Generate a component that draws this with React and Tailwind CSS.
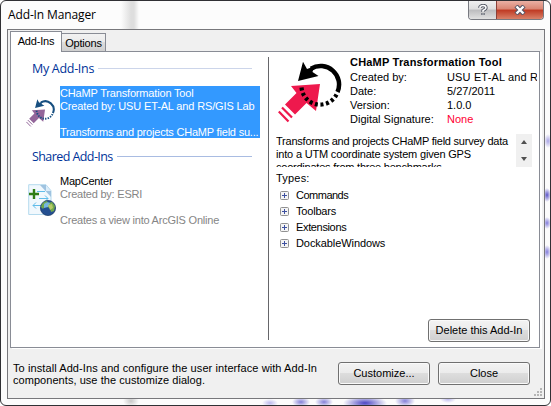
import React from 'react';

const ui = 'font-["Liberation_Sans",Arial,sans-serif]';
const segoe = 'font-["Open_Sans","Noto_Sans",sans-serif]';

function ArrowIcon({ className, arrow, ring }) {
  return (
    <svg viewBox="0 0 64 64" className={className} fill="none">
      <path d="M42 23 13 25 18.500 32 7 43.500 17 53.500 28.500 42 38 50Z" fill={arrow} />
      <path d="M4 46.500 14 56.500M.8 50.500 10.500 60.500" stroke={arrow} strokeWidth="2.200" />
      <path d="M33 7.700A18.500 18.500 0 0 1 59.500 31" stroke={ring} strokeWidth="4.500" />
      <path d="M25 .7 20 20 40.500 15 34.500 11 36 5.500 29 8Z" fill={ring} />
      <path d="M58.500 33.500A18.500 18.500 0 0 1 23.500 25" stroke={ring} strokeWidth="4.200" strokeDasharray="3 2.600" />
    </svg>
  );
}

function MapIcon() {
  return (
    <svg viewBox="0 0 28 32" className="h-8 w-7" fill="none">
      <path d="M.7.7H18l5 6V30.5H.7Z" fill="#f1f8fd" stroke="#b4daee" />
      <path d="M12 1h6l5 6v6Z" fill="#9fc3e0" />
      <path d="M18 1v6h5Z" fill="#dceefa" />
      <path d="M9 7.5h8M11 14.5h9m-3-3 3 3-3 3M5 21.5h9M8 18.500l-3 3 3 3" stroke="#62bdea" />
      <path d="M6 5v10M1 10h10" stroke="#2f7e16" strokeWidth="2.4" />
      <circle cx="20" cy="24" r="7.6" fill="#244f91" stroke="#17335f" strokeWidth=".7" />
      <path d="M14 20q2-3 5-3l1 2-3 3-2 3-2-2ZM20 19l4-1 3 4-1 5-3 1-1-4-3-1Z" fill="#71a94a" />
      <path d="M16 20q3-3 6-1l-2 4-4 1Z" fill="#76b6df" />
      <path d="m20 21 4-1 1 4-3 2Z" fill="#b6ca67" />
    </svg>
  );
}

function Button({ children, className }) {
  return (
    <button className={`flex h-[23px] shrink-0 items-center justify-center rounded-[3px] border border-[#707070] bg-[linear-gradient(#f3f3f3,#ebebeb_49%,#dddddd_50%,#cfcfcf)] whitespace-nowrap shadow-[inset_0_0_0_1px_#fafafa] ${className}`}>
      {children}
    </button>
  );
}

function Heading({ children, line, tracking }) {
  return (
    <div className={`flex h-[18px] items-center gap-1 pl-[21px] pr-[16px] text-[12.5px] text-[#003399] ${segoe}`}>
      <span className={`whitespace-nowrap ${tracking}`}>{children}</span>
      <i className={`h-px flex-1 ${line}`} />
    </div>
  );
}

function Detail({ label, value, valueClass = '' }) {
  return (
    <div className="flex h-[14px] items-center whitespace-nowrap">
      <span className="w-[97px] shrink-0">{label}</span>
      <span className={valueClass}>{value}</span>
    </div>
  );
}

function TreeRow({ children, tracking }) {
  return (
    <div className="flex h-4 items-center gap-[7px]">
      <svg viewBox="0 0 9 9" className="size-[9px]" fill="none">
        <rect x=".5" y=".5" width="8" height="8" rx="1" fill="#f4f4f4" stroke="#919191" />
        <path d="M2 4.500h5M4.500 2v5" stroke="#3d50a0" />
      </svg>
      <span className={tracking}>{children}</span>
    </div>
  );
}

export default function App() {
  return (
    <div className={`flex h-[406px] w-[551px] flex-col overflow-hidden rounded-[6px] border border-[#303034] bg-[#fcfcfc] text-[11px] leading-[13px] text-black ${ui}`}>
      <header className="flex h-7 shrink-0 items-start justify-between bg-[linear-gradient(90deg,transparent_120px,#dedede_130px,#dedede_133px,transparent_138px)] pl-[7px] pr-[6px]">
        <h1 className={`pt-[5px] text-[12px] leading-[18px] tracking-[-0.13px] ${segoe}`}>Add-In Manager</h1>
        <div className="flex h-[19px] w-[76px] overflow-hidden rounded-b-[4px] border border-t-0 border-[#777980]">
          <div className="flex w-[27px] items-center justify-center bg-[linear-gradient(#f0f0f0,#dedede_45%,#bcbcbe_50%,#e1e1e1)]">
            <svg viewBox="0 0 10 12" className="h-3 w-2.5" fill="none">
              <path d="M2 4V3Q3 1.500 5 1.500Q8 1.500 8 4Q8 5 5 6.500V8M5 9v2" stroke="#555a66" strokeWidth="3.300" />
              <path d="M2 4V3Q3 1.500 5 1.500Q8 1.500 8 4Q8 5 5 6.500V8M5 9.500v1" stroke="#fff" strokeWidth="1.500" />
            </svg>
          </div>
          <div className="flex flex-1 items-center justify-center border-l border-[#8c4038] bg-[linear-gradient(#eab0a4,#d98472_45%,#bf3922_50%,#d98168)]">
            <svg viewBox="0 0 12 10" className="h-2.5 w-3" fill="none">
              <path d="m2 1 8 8m0-8L2 9" stroke="#555566" strokeWidth="4.400" />
              <path d="m2.500 1.500 7 7m0-7-7 7" stroke="#fff" strokeWidth="2.400" />
            </svg>
          </div>
        </div>
      </header>

      <div className="flex flex-1 bg-[radial-gradient(ellipse_4px_7px_at_546px_166px,#5a53c8,transparent),radial-gradient(ellipse_4px_6px_at_546px_194px,#837ddc,transparent),radial-gradient(ellipse_4px_7px_at_546px_223px,#837ddc,transparent),radial-gradient(ellipse_4px_7px_at_547px_112px,#aaa6e6,transparent),radial-gradient(ellipse_9px_5px_at_300px_373px,#8480d8,transparent),radial-gradient(ellipse_9px_5px_at_323px_373px,#8480d8,transparent),radial-gradient(ellipse_22px_7px_at_364px_374px,#4b45c4,transparent),radial-gradient(ellipse_10px_6px_at_404px_372px,#8480d8,transparent),radial-gradient(ellipse_8px_4px_at_447px_370px,#bbb8ee,transparent),radial-gradient(ellipse_8px_4px_at_269px_374px,#bbb8ee,transparent),radial-gradient(ellipse_8px_6px_at_130px_372px,#c8c8c8,transparent)] pl-[6px]">
        <main className="flex h-[370px] w-[538px] flex-col border border-[#77777b] bg-[#f0f0f0]">
          <nav className="flex h-[21px] shrink-0 items-end pl-[2px] tracking-[-0.2px]">
            <div className="z-10 -mb-px flex h-[21px] w-[52px] items-center justify-center border border-b-0 border-[#898c95] bg-white pb-px">Add-Ins</div>
            <div className="flex h-[18px] w-[44px] items-center justify-center border border-b-0 border-l-0 border-[#898c95] bg-[linear-gradient(#f2f2f2,#ebebeb_49%,#dddddd_50%,#cfcfcf)] pt-px">Options</div>
          </nav>
          <div className="mx-[2px] flex h-[297px] w-[530px] shrink-0 border border-[#898c95] bg-white shadow-[2px_1px_0_#fff]">
            <section className="w-[257px] shrink-0 pt-[7px]">
              <Heading line="bg-[#ccd5ea]" tracking="tracking-[-0.3px]">My Add-Ins</Heading>
              <div className="mt-[9px] flex h-[52px] pl-[15px]">
                <ArrowIcon className="mt-[13px] mr-[5px] size-[29px] shrink-0" arrow="#93669a" ring="#174f80" />
                <div className="w-[200px] bg-[#3399ff] whitespace-nowrap pt-px text-white">
                  <p className="tracking-[-0.17px]">CHaMP Transformation Tool</p>
                  <p className="tracking-[-0.14px]">Created by: USU ET-AL and RS/GIS Lab</p>
                  <p className="mt-[13px] -mb-px tracking-[-0.2px]">Transforms and projects CHaMP field su...</p>
                </div>
              </div>
              <div className="mt-[9px]"><Heading line="bg-[#a9bce2]" tracking="tracking-[-0.58px]">Shared Add-Ins</Heading></div>
              <div className="mt-[10px] flex pl-[17px]">
                <div className="mt-[9px] mr-1"><MapIcon /></div>
                <div className="whitespace-nowrap tracking-[-0.22px] text-[#858585]">
                  <p className="text-black">MapCenter</p>
                  <p>Created by: ESRI</p>
                  <p className="mt-[13px]">Creates a view into ArcGIS Online</p>
                </div>
              </div>
            </section>
            <i className="mt-[5px] h-[283px] w-px shrink-0 bg-[#66666a]" />
            <section className="flex min-w-0 flex-1 flex-col pl-[7px] pr-[2px]">
              <div className="flex h-[82px] shrink-0 overflow-hidden pt-1">
                <ArrowIcon className="mt-[5px] ml-[2px] mr-[8px] size-16 shrink-0" arrow="#ee194d" ring="#000" />
                <div>
                  <p className="h-[14px] whitespace-nowrap font-bold tracking-[0.2px]">CHaMP Transformation Tool</p>
                  <Detail label="Created by:" value="USU ET-AL and R" valueClass="tracking-[0.15px]" />
                  <Detail label="Date:" value="5/27/2011" />
                  <Detail label="Version:" value="1.0.0" />
                  <Detail label="Digital Signature:" value="None" valueClass="text-[#ff0033]" />
                </div>
              </div>
              <div className="flex h-[33px] shrink-0 justify-between overflow-hidden pr-[5px]">
                <p className="whitespace-nowrap pt-px tracking-[-0.23px]">Transforms and projects CHaMP field survey data<br /><span className="tracking-[-0.18px]">into a UTM coordinate system given GPS</span><br />coordinates from three benchmarks.</p>
                <svg viewBox="0 0 16 33" className="h-[33px] w-4 shrink-0">
                  <path d="M0 0h16v33H0Z" fill="#f0f0f0" />
                  <path d="m5 10 3-4 3 4ZM5 23h6l-3 4Z" fill="#505050" />
                </svg>
              </div>
              <p className="mt-[5px] tracking-[0.2px]">Types:</p>
              <div className="mt-[2px] pl-1">
                <TreeRow tracking="tracking-[-0.5px]">Commands</TreeRow>
                <TreeRow tracking="tracking-[-0.2px]">Toolbars</TreeRow>
                <TreeRow tracking="tracking-[-0.35px]">Extensions</TreeRow>
                <TreeRow tracking="tracking-[-0.08px]">DockableWindows</TreeRow>
              </div>
              <div className="mt-auto flex justify-end pb-[5px] pr-[7px]"><Button className="w-[102px]">Delete this Add-In</Button></div>
            </section>
          </div>
          <footer className="flex flex-1 items-start pt-[14px] pl-[5px]">
            <p className="w-[325px] shrink-0 whitespace-nowrap leading-[12px] tracking-[0.09px]">To install Add-Ins and configure the user interface with Add-In<br /><span className="tracking-[0.05px]">components, use the customize dialog.</span></p>
            <Button className="mr-2 w-[92px]">Customize...</Button>
            <Button className="w-[92px]">Close</Button>
            <svg viewBox="0 0 8 8" className="mt-[26px] ml-[4px] size-2 shrink-0" fill="#b5b5b5"><path d="M6 0h2v2H6ZM3 3h2v2H3ZM6 3h2v2H6ZM0 6h2v2H0ZM3 6h2v2H3ZM6 6h2v2H6Z" /></svg>
          </footer>
        </main>
      </div>
    </div>
  );
}
